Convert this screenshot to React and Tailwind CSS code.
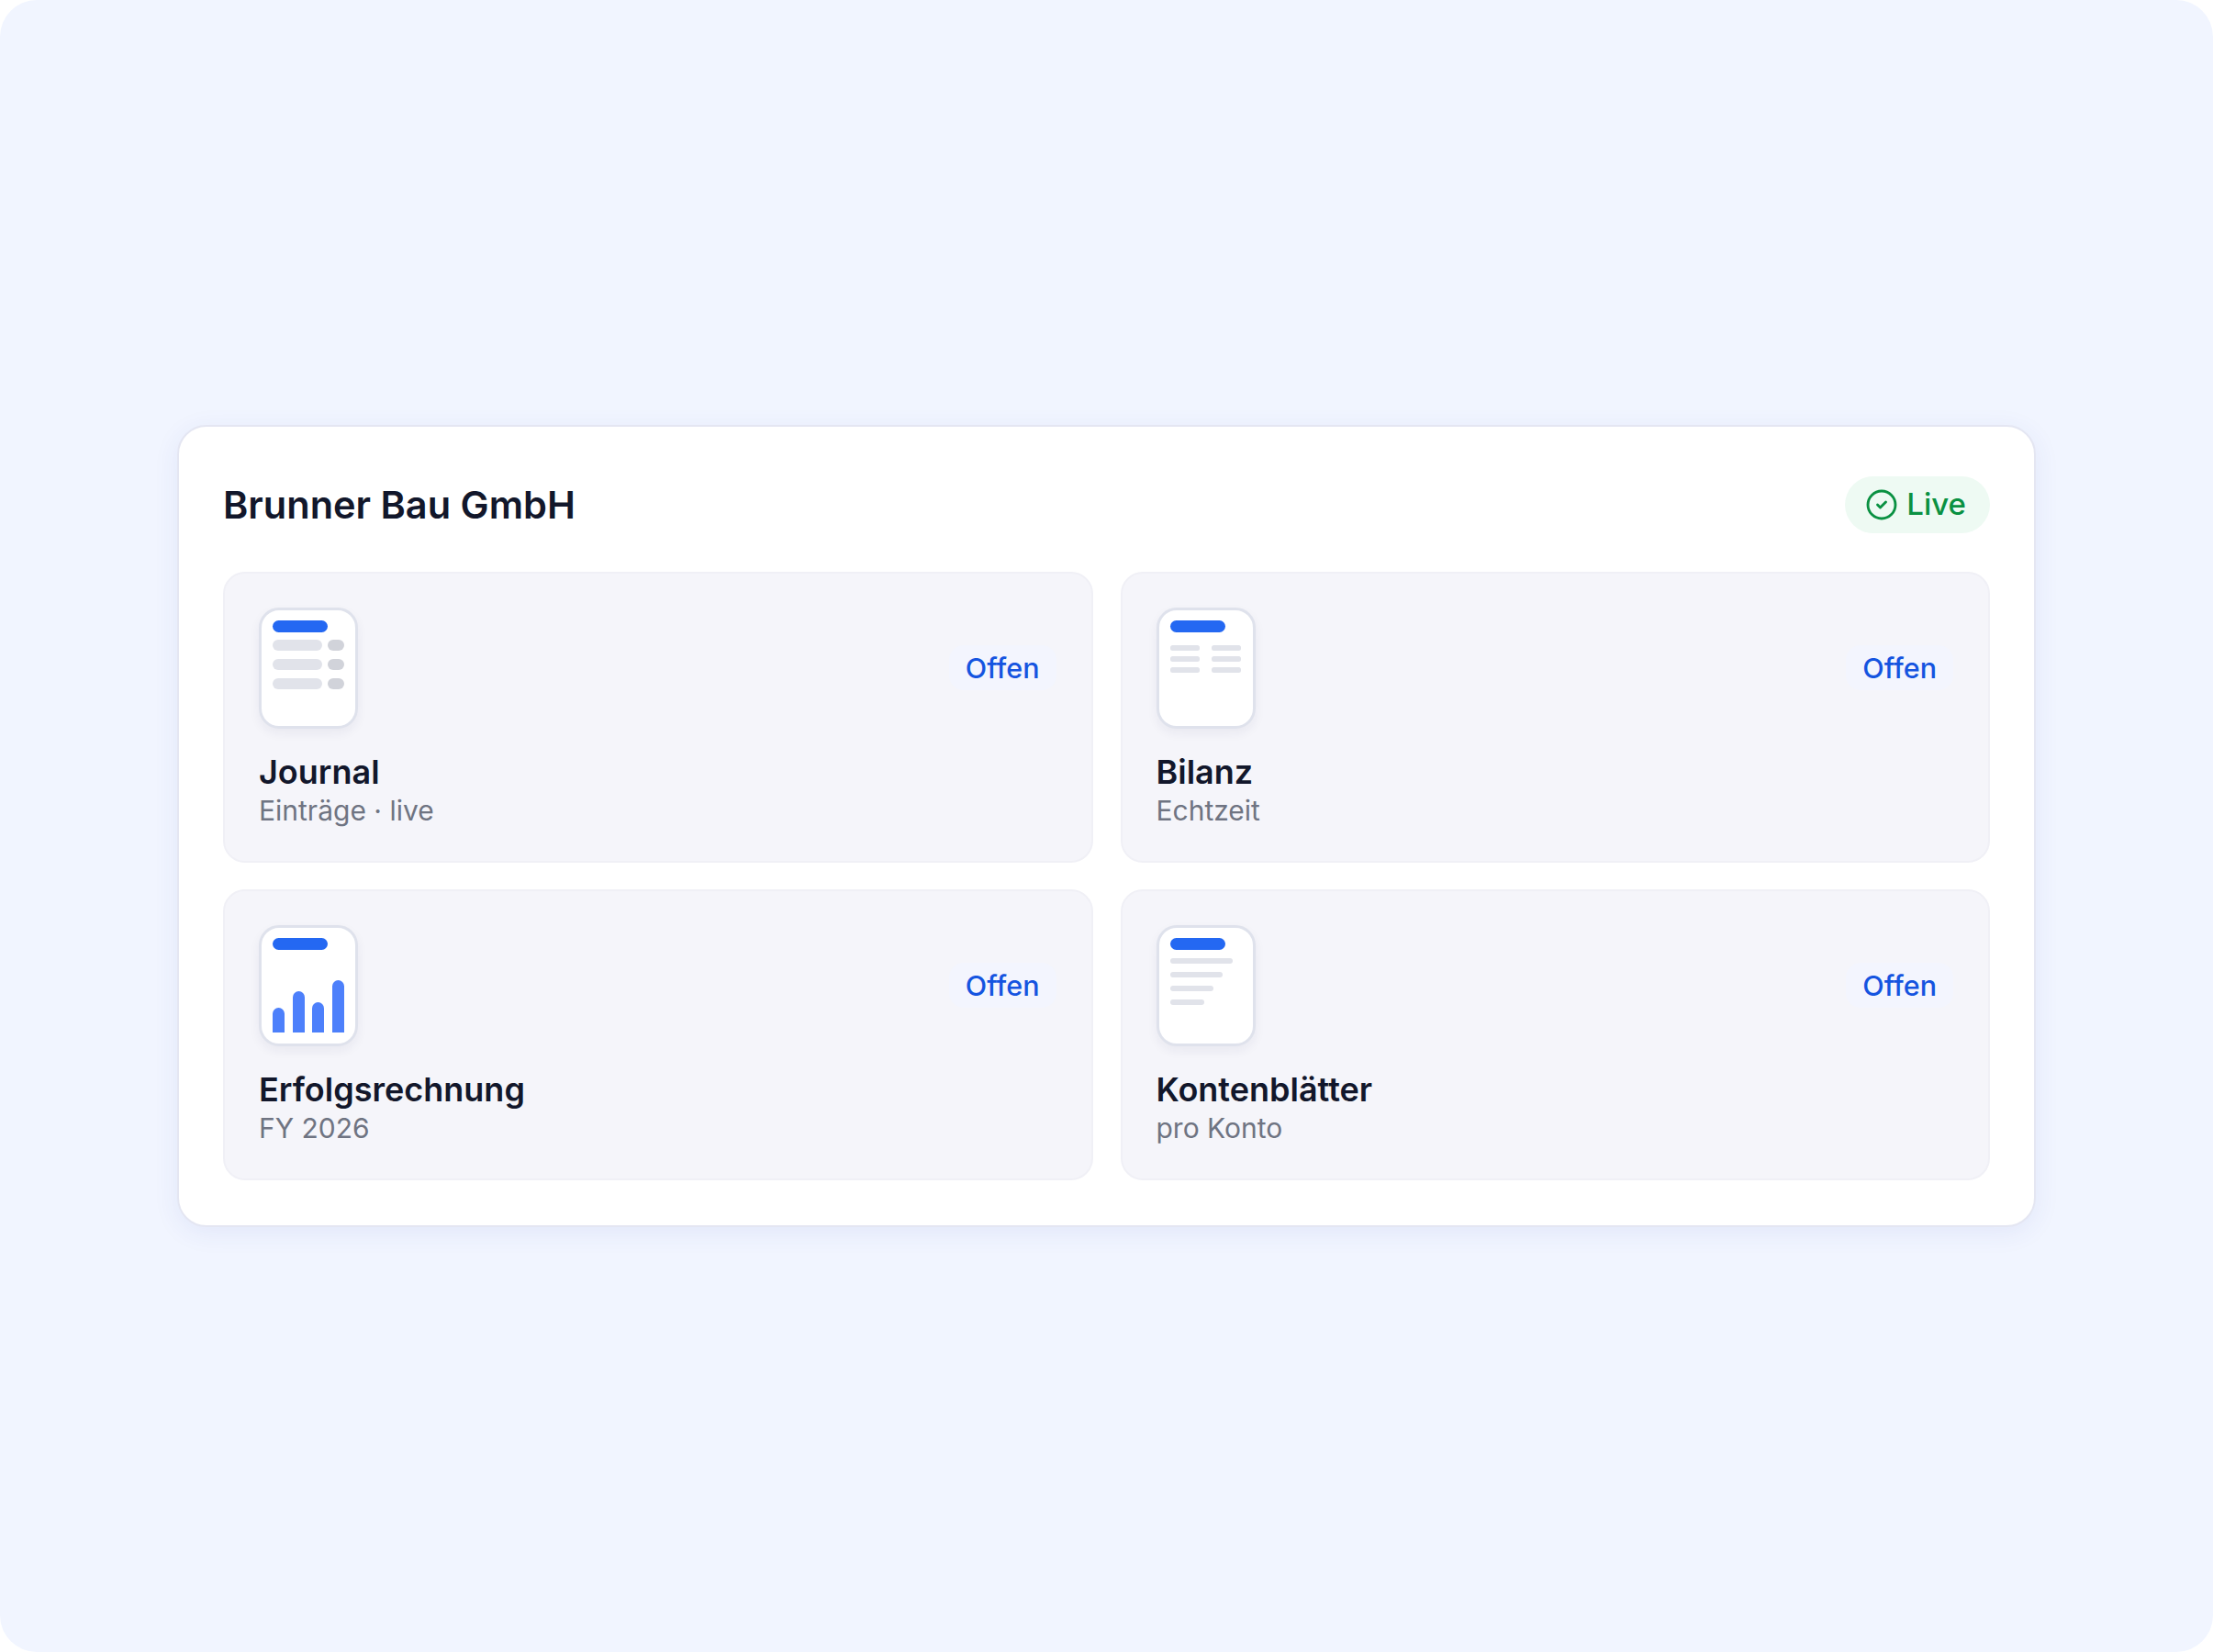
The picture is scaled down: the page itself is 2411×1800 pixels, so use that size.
import React from "react";
import { CircleCheck } from "lucide-react";

const BLUE = "#2468f2";
const LINE = "#e1e3ea";

// Little page thumbnails, coordinates are inside the 100x124 white area
function JournalThumb() {
  return (
    <>
      {[32, 53, 74].map((y) => (
        <g key={y}>
          <rect x="11" y={y} width="54" height="12" rx="6" fill={LINE} />
          <rect x="71" y={y} width="18" height="12" rx="6" fill="#d1d3da" />
        </g>
      ))}
    </>
  );
}

function BilanzThumb() {
  return (
    <>
      {[38, 50, 62].map((y) => (
        <g key={y}>
          <rect x="11" y={y} width="32" height="6" rx="2.5" fill={LINE} />
          <rect x="56" y={y} width="32" height="6" rx="2.5" fill={LINE} />
        </g>
      ))}
    </>
  );
}

function ChartThumb() {
  const bars = [
    [11, 87],
    [33, 69],
    [54, 81],
    [76, 57],
  ];
  return (
    <>
      {bars.map(([x, y]) => (
        <path
          key={x}
          d={`M${x} 114V${y + 6.5}a6.5 6.5 0 0 1 13 0V114Z`}
          fill="#4d80fb"
        />
      ))}
    </>
  );
}

function KontenThumb() {
  const rows = [
    [33, 68],
    [48, 57],
    [63, 47],
    [78, 37],
  ];
  return (
    <>
      {rows.map(([y, w]) => (
        <rect key={y} x="11" y={y} width={w} height="6" rx="3" fill={LINE} />
      ))}
    </>
  );
}

function ReportCard({ title, sub, Thumb }) {
  return (
    <div className="rounded-[24px] border-2 border-[#f0f0f6] bg-[#f5f5fa] pt-[37px] pr-[38px] pb-[36px] pl-[37px]">
      <div className="flex items-center justify-between">
        <div className="h-[132px] w-[108px] rounded-[22px] border-[3px] border-[#dfe2ec] bg-white shadow-[0_5px_12px_rgba(30,41,90,0.06)]">
          <svg viewBox="0 0 102 126" className="block h-[126px] w-[102px]">
            <g transform="translate(1 0)">
              <rect x="11" y="11" width="60" height="13" rx="6.5" fill={BLUE} />
              <Thumb />
            </g>
          </svg>
        </div>
        <span className="mb-[1px] rounded-[16px] bg-[#f3f5fe] px-[18px] py-[3px] text-[30.5px] leading-[43px] font-[450] text-[#1554e0]">
          Offen
        </span>
      </div>
      <div className="mt-[25px] text-[36px] leading-[44px] font-semibold text-[#12172b]">{title}</div>
      <div className="mt-[1px] text-[30px] leading-[38px] text-[#6f7482]">{sub}</div>
    </div>
  );
}

export default function App() {
  return (
    <div className="h-[1800px] bg-white font-['Inter',sans-serif]">
      <div className="flex h-full items-center justify-center rounded-[40px] bg-[#f1f5ff]">
        <div className="w-[2025px] rounded-[32px] border-2 border-[#e4e6f2] bg-white px-[48px] pt-[54px] pb-[49px] shadow-[0_6px_28px_rgba(50,70,180,0.08)]">
          <div className="flex items-center justify-between">
            <h1 className="pt-[1px] text-[41.5px] leading-[61px] font-semibold text-[#12172b]">Brunner Bau GmbH</h1>
            <div className="flex h-[62px] items-center gap-[9px] rounded-full bg-[#eefaf3] pr-[26px] pl-[22px] text-[#0a9142]">
              <CircleCheck size={36} strokeWidth={1.9} />
              <span className="text-[33px] font-[450]">Live</span>
            </div>
          </div>
          <div className="mt-[42px] grid grid-cols-2 gap-x-[30px] gap-y-[29px]">
            <ReportCard title="Journal" sub="Einträge · live" Thumb={JournalThumb} />
            <ReportCard title="Bilanz" sub="Echtzeit" Thumb={BilanzThumb} />
            <ReportCard title="Erfolgsrechnung" sub="FY 2026" Thumb={ChartThumb} />
            <ReportCard title="Kontenblätter" sub="pro Konto" Thumb={KontenThumb} />
          </div>
        </div>
      </div>
    </div>
  );
}
